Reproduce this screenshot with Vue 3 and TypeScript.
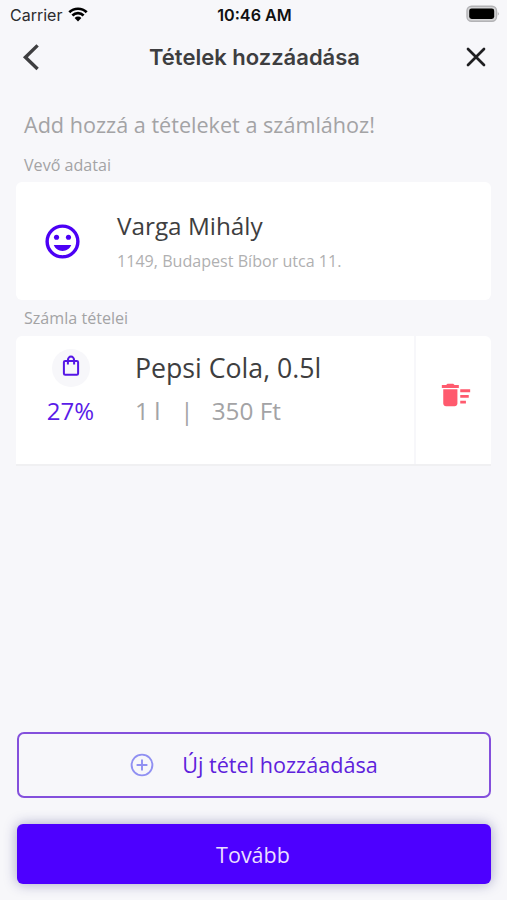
<script setup lang="ts">
import { ref } from 'vue'

interface Customer {
  name: string
  address: string
}

interface InvoiceItem {
  id: number
  vat: string
  name: string
  quantity: string
  price: string
}

const customer: Customer = { name: 'Varga Mihály', address: '1149, Budapest Bíbor utca 11.' }

const items = ref<InvoiceItem[]>([
  { id: 1, vat: '27%', name: 'Pepsi Cola, 0.5l', quantity: '1 l', price: '350 Ft' },
])

function removeItem(id: number): void {
  items.value = items.value.filter((item) => item.id !== id)
}
</script>

<template>
  <div class="screen">
    <div class="status">
      <div class="carrier">
        <span class="carrier-name">Carrier</span>
        <svg class="wifi" viewBox="0 0 20 15">
          <path d="M1.3 5.3 A12.4 12.4 0 0 1 18.7 5.3" />
          <path d="M4.4 8.5 A8 8 0 0 1 15.6 8.5" />
          <path class="dot" d="M6.6 10.9 A4.9 4.9 0 0 1 13.4 10.9 L10 14.4 Z" />
        </svg>
      </div>
      <span class="clock">10:46 AM</span>
      <div class="power">
        <svg class="battery" viewBox="0 0 34 18">
          <rect x="1" y="1.2" width="29.5" height="15" rx="4.5" fill="#d4d4d6" stroke="#b3b3b6" stroke-width="1.4" />
          <rect x="3.2" y="3.4" width="25" height="10.6" rx="2.4" fill="#000" />
          <path d="M31.8 6.6 Q33.6 8.7 31.8 10.8 Z" fill="#a5a5a8" />
        </svg>
      </div>
    </div>

    <header class="nav">
      <button class="nav-btn" aria-label="Vissza">
        <svg class="back" viewBox="0 0 18 28"><path d="M15.6 2.4 L3.4 14.2 L15.6 26" /></svg>
      </button>
      <h1 class="title">Tételek hozzáadása</h1>
      <button class="nav-btn end" aria-label="Bezárás">
        <svg class="close" viewBox="0 0 20 20"><path d="M2 2 L18 18 M18 2 L2 18" /></svg>
      </button>
    </header>

    <main class="content">
      <p class="lead">Add hozzá a tételeket a számlához!</p>
      <h2 class="label first">Vevő adatai</h2>
      <section class="card customer">
        <svg class="smile" viewBox="0 0 24 24">
          <circle cx="12" cy="12" r="9" fill="none" stroke="currentColor" stroke-width="2" />
          <circle cx="8.5" cy="9.5" r="1.5" />
          <circle cx="15.5" cy="9.5" r="1.5" />
          <path d="M12 17.5c2.33 0 4.31-1.46 5.11-3.5H6.89c.8 2.04 2.78 3.5 5.11 3.5z" />
        </svg>
        <div class="person">
          <span class="name">{{ customer.name }}</span>
          <span class="address">{{ customer.address }}</span>
        </div>
      </section>

      <h2 class="label second">Számla tételei</h2>
      <section v-for="item in items" :key="item.id" class="card item">
        <div class="vat">
          <span class="badge">
            <svg class="bag" viewBox="0 0 18 22">
              <rect x="1.9" y="6" width="14.2" height="13.7" rx="1.3" />
              <path d="M5.9 9.4 V5.2 a3.1 3.6 0 0 1 6.2 0 V9.4" />
            </svg>
          </span>
          <span class="rate">{{ item.vat }}</span>
        </div>
        <div class="details">
          <span class="item-name">{{ item.name }}</span>
          <div class="meta">
            <span class="qty">{{ item.quantity }}</span>
            <span class="bar">|</span>
            <span>{{ item.price }}</span>
          </div>
        </div>
        <button class="remove" aria-label="Törlés" @click="removeItem(item.id)">
          <svg class="trash" viewBox="0 0 24 24">
            <path d="M15 16h4v2h-4zm0-8h7v2h-7zm0 4h6v2h-6zM3 18c0 1.1.9 2 2 2h6c1.1 0 2-.9 2-2V8H3v10zM14 5h-3l-1-1H6L5 5H2v2h12z" />
          </svg>
        </button>
      </section>
    </main>

    <footer class="actions">
      <button class="add">
        <svg class="plus" viewBox="0 0 24 24">
          <circle cx="12" cy="12" r="10.4" />
          <path d="M12 6.6 V17.4 M6.6 12 H17.4" />
        </svg>
        <span>Új tétel hozzáadása</span>
      </button>
      <button class="next">Tovább</button>
    </footer>
  </div>
</template>

<style>
body {
  background: #f7f7fa;
}
</style>

<style scoped>
.screen {
  box-sizing: border-box;
  height: 900px;
  display: flex;
  flex-direction: column;
  background: #f7f7fa;
  color: #3e3e40;
  font-family: 'Open Sans', 'Noto Sans', sans-serif;
}

button {
  margin: 0;
  padding: 0;
  border: 0;
  background: none;
  color: inherit;
  font: inherit;
}

svg {
  display: block;
  flex: none;
}

h1, h2, p {
  margin: 0;
  font-weight: 400;
}

.status {
  height: 30px;
  display: grid;
  grid-template-columns: 1fr auto 1fr;
  align-items: center;
  padding: 0 8px 0 10px;
  font: 16px/30px Inter, sans-serif;
  color: #2c2c2e;
}

.carrier {
  display: flex;
  align-items: center;
  gap: 6px;
}

.wifi {
  width: 20px;
  height: 15px;
  margin-top: -2px;
  fill: none;
  stroke: #000;
  stroke-width: 2.7;
}

.wifi .dot {
  fill: #000;
  stroke: none;
}

.clock {
  font-weight: 600;
  font-size: 16.2px;
  color: #111;
}

.power {
  display: flex;
  justify-content: flex-end;
}

.battery {
  width: 34px;
  height: 18px;
  margin-top: -2px;
  margin-right: -1px;
}

.nav {
  height: 54px;
  display: grid;
  grid-template-columns: 60px 1fr 60px;
  align-items: center;
  padding: 0 21px;
}

.nav-btn {
  display: flex;
  color: #3e3e40;
}

.nav-btn.end {
  justify-content: flex-end;
  color: #1f1f21;
}

.back,
.close {
  fill: none;
  stroke: currentColor;
  stroke-width: 3.4;
}

.back {
  width: 18px;
  height: 28px;
  margin-left: 1px;
}

.close {
  width: 20px;
  height: 20px;
  stroke-width: 2.7;
  stroke-linecap: round;
}

.title {
  padding-left: 2px;
  text-align: center;
  font: 600 22px/54px Inter, sans-serif;
  white-space: nowrap;
}

.content {
  flex: 1;
  padding: 26px 16px 0;
}

.lead {
  padding-left: 8px;
  font-size: 21.6px;
  line-height: 30px;
  color: #a3a3a5;
}

.label {
  padding-left: 8px;
  font-size: 16.1px;
  line-height: 20px;
  color: #a3a3a5;
}

.label.first {
  margin: 15px 0 7px;
}

.label.second {
  margin: 8px 0;
}

.card {
  display: flex;
  background: #fff;
  border-radius: 6px;
}

.customer {
  height: 118px;
  align-items: center;
}

.smile {
  width: 41px;
  height: 41px;
  margin-left: 26px;
  fill: currentColor;
  color: #4c00f5;
}

.person {
  display: flex;
  flex-direction: column;
  margin-left: 34px;
  padding-top: 3px;
}

.name {
  font-size: 24.3px;
  line-height: 36px;
}

.address {
  font-size: 16.1px;
  line-height: 34px;
  color: #b0b0b1;
}

.item {
  height: 128px;
  border-bottom: 2px solid #f0f0f2;
  border-radius: 6px 6px 0 0;
}

.vat {
  width: 109px;
  display: flex;
  flex-direction: column;
  align-items: center;
  padding-top: 13px;
}

.badge {
  width: 38px;
  height: 38px;
  display: flex;
  align-items: center;
  justify-content: center;
  border-radius: 50%;
  background: #f7f7fa;
}

.bag {
  width: 18px;
  height: 22px;
  margin-top: -4px;
  fill: none;
  stroke: #5516e6;
  stroke-width: 2;
}

.rate {
  margin-top: 8px;
  font-size: 24px;
  line-height: 32px;
  color: #5a1ce8;
}

.details {
  flex: 1;
  padding: 14px 0 0 10px;
}

.item-name {
  display: block;
  font-size: 26.7px;
  line-height: 35px;
}

.meta {
  display: flex;
  margin-top: 10px;
  font-size: 24.3px;
  line-height: 32px;
  color: #a3a3a5;
}

.qty {
  word-spacing: -1px;
}

.bar {
  margin: 0 18px 0 20px;
}

.remove {
  width: 77px;
  display: flex;
  justify-content: center;
  border-left: 2px solid #f7f7fa;
}

.trash {
  width: 34px;
  height: 34px;
  margin-top: 42px;
  margin-left: 4px;
  fill: #ff5a6e;
}

.actions {
  display: flex;
  flex-direction: column;
  gap: 26px;
  padding: 0 16px 16px 17px;
}

.add {
  box-sizing: border-box;
  height: 66px;
  display: flex;
  align-items: center;
  justify-content: center;
  gap: 28px;
  border: 2px solid #8450dc;
  border-radius: 7px;
  font-size: 21.6px;
  line-height: 30px;
  color: #5e22dc;
}

.plus {
  width: 24px;
  height: 24px;
  fill: none;
  stroke: #9090f2;
  stroke-width: 1.9;
}

.next {
  height: 60px;
  padding-right: 2px;
  border-radius: 6px;
  background: #4d00ff;
  box-shadow: 0 0 13px rgba(40, 40, 120, 0.4);
  font-size: 21.5px;
  color: #eadfff;
}
</style>
